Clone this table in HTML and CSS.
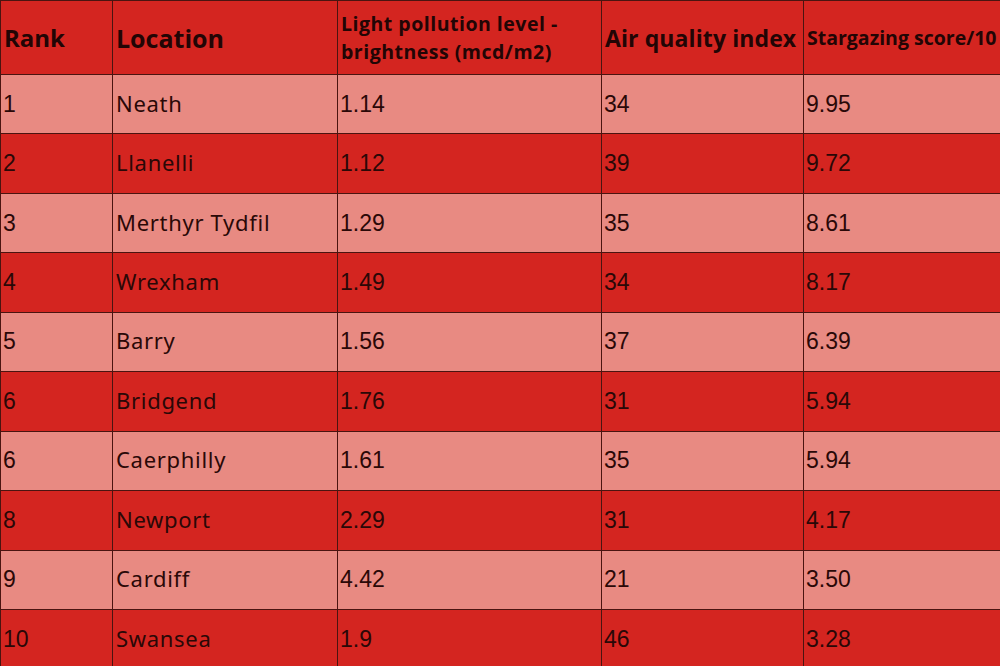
FILE: index.html
```html
<!DOCTYPE html>
<html lang="en">
<head>
<meta charset="utf-8">
<title>Stargazing ranking</title>
<link rel="stylesheet" href="styles.css">
</head>
<body>
<div class="frame">
<table class="rank-table">
  <colgroup>
    <col class="c-rank"><col class="c-loc"><col class="c-light"><col class="c-air"><col class="c-score">
  </colgroup>
  <thead>
    <tr>
      <th class="h-big">Rank</th>
      <th class="h-big">Location</th>
      <th class="h-small">Light pollution level -<br>brightness (mcd/m2)</th>
      <th class="h-mid">Air quality index</th>
      <th class="h-tiny">Stargazing score/10</th>
    </tr>
  </thead>
  <tbody>
    <tr class="light"><td>1</td><td class="loc">Neath</td><td>1.14</td><td>34</td><td>9.95</td></tr>
    <tr class="dark"><td>2</td><td class="loc">Llanelli</td><td>1.12</td><td>39</td><td>9.72</td></tr>
    <tr class="light"><td>3</td><td class="loc">Merthyr Tydfil</td><td>1.29</td><td>35</td><td>8.61</td></tr>
    <tr class="dark"><td>4</td><td class="loc">Wrexham</td><td>1.49</td><td>34</td><td>8.17</td></tr>
    <tr class="light"><td>5</td><td class="loc">Barry</td><td>1.56</td><td>37</td><td>6.39</td></tr>
    <tr class="dark"><td>6</td><td class="loc">Bridgend</td><td>1.76</td><td>31</td><td>5.94</td></tr>
    <tr class="light"><td>6</td><td class="loc">Caerphilly</td><td>1.61</td><td>35</td><td>5.94</td></tr>
    <tr class="dark"><td>8</td><td class="loc">Newport</td><td>2.29</td><td>31</td><td>4.17</td></tr>
    <tr class="light"><td>9</td><td class="loc">Cardiff</td><td>4.42</td><td>21</td><td>3.50</td></tr>
    <tr class="dark"><td>10</td><td class="loc">Swansea</td><td>1.9</td><td>46</td><td>3.28</td></tr>
  </tbody>
</table>
</div>
</body>
</html>
```

FILE: styles.css
```css
html, body {
  margin: 0;
  padding: 0;
  background: #d42520;
}
.frame {
  width: 1000px;
  height: 666px;
  overflow: hidden;
}
.rank-table {
  border-collapse: collapse;
  table-layout: fixed;
  width: 1030px;
  color: #2a0807;
}
.c-rank { width: 112px; }
.c-loc { width: 225px; }
.c-light { width: 264px; }
.c-air { width: 202px; }
.c-score { width: 227px; }
.rank-table th,
.rank-table td {
  border: 1px solid #4a1410;
  padding: 0 0 0 2px;
  text-align: left;
  vertical-align: middle;
  white-space: nowrap;
}
.rank-table th {
  height: 73px;
  padding-left: 3px;
  background: #d42520;
  font-family: "Open Sans", "Liberation Sans", sans-serif;
  font-weight: 700;
  color: #220505;
}
.h-big { font-size: 24px; }
.h-big + .h-big { font-size: 25px; }
.h-mid { font-size: 23px; letter-spacing: 0.1px; }
.h-small { font-size: 19.5px; line-height: 28px; letter-spacing: 0.5px; }
.h-tiny { font-size: 19.5px; letter-spacing: 0; }
.rank-table td {
  height: 58.45px;
  font-family: "Liberation Sans", Arial, sans-serif;
  font-size: 23px;
}
.rank-table td.loc {
  padding: 0 0 3px 3px;
  height: 55.45px;
  font-family: "Noto Sans", "Open Sans", sans-serif;
  font-size: 22px;
  letter-spacing: 0.7px;
}
.light td { background: #e88a82; }
.dark td { background: #d42520; }
```
